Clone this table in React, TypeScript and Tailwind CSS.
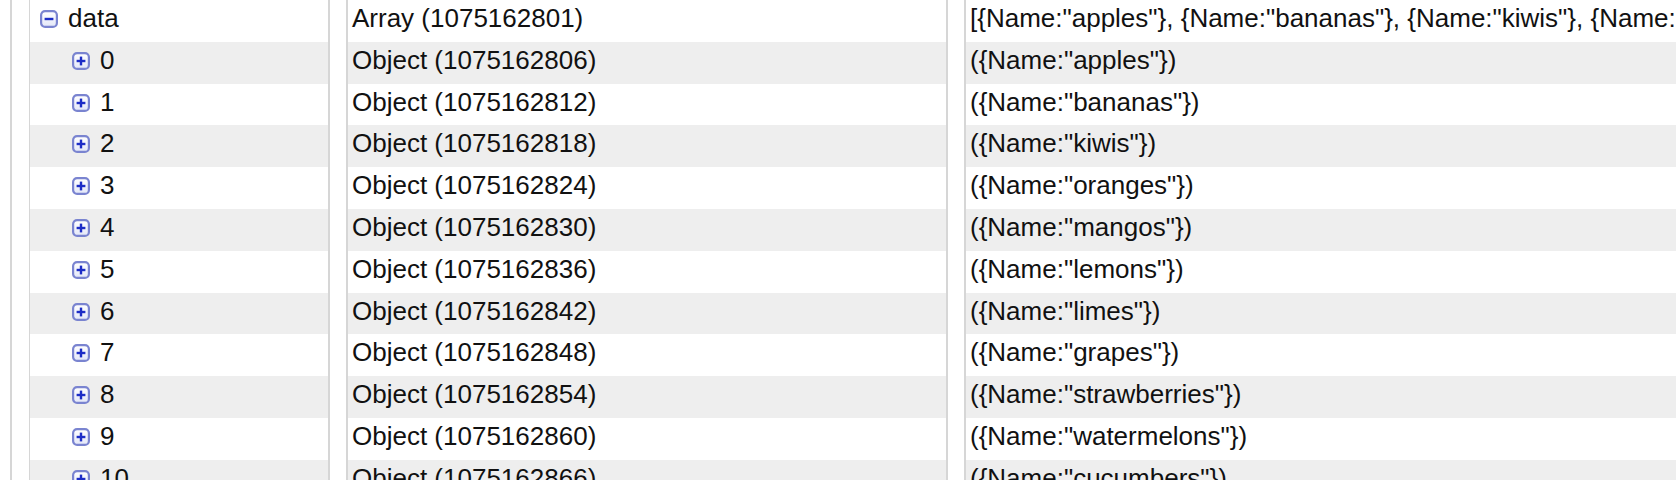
import React from "react";

const names = [
  "apples",
  "bananas",
  "kiwis",
  "oranges",
  "mangos",
  "lemons",
  "limes",
  "grapes",
  "strawberries",
  "watermelons",
  "cucumbers",
];

function ToggleIcon({ minus }: { minus?: boolean }) {
  const id = minus ? "gm" : "gp";
  return (
    <svg
      width="18"
      height="18"
      viewBox="0 0 18 18"
      className="inline-block align-[-1px]"
    >
      <defs>
        <linearGradient id={id} x1="0" y1="0" x2="0" y2="1">
          <stop offset="0" stopColor="#ffffff" />
          <stop offset="1" stopColor="#e3e7f8" />
        </linearGradient>
      </defs>
      <rect
        x="1.1"
        y="1.1"
        width="15.8"
        height="15.8"
        rx="4"
        fill={`url(#${id})`}
        stroke="#7a84d0"
        strokeWidth="2.2"
      />
      <line x1="4.6" y1="9" x2="13.4" y2="9" stroke="#1d2dc6" strokeWidth="2.4" />
      {!minus && (
        <line x1="9" y1="4.6" x2="9" y2="13.4" stroke="#1d2dc6" strokeWidth="2.4" />
      )}
    </svg>
  );
}

const rowCls = (i: number) =>
  `h-[41.8px] leading-[36px] whitespace-nowrap overflow-hidden ${
    i % 2 === 1 ? "bg-[#eeeeee]" : "bg-white"
  }`;

export default function App() {
  const rows = names.map((n, i) => ({
    key: String(i),
    type: `Object (${1075162806 + 6 * i})`,
    value: `({Name:"${n}"})`,
  }));
  const arrVal = "[" + names.map((n) => `{Name:"${n}"}`).join(", ") + "]";

  return (
    <div
      className="flex h-[480px] w-[1676px] overflow-hidden bg-white text-[26px] text-[#111111]"
      style={{ fontFamily: '"Liberation Sans", Arial, Helvetica, sans-serif' }}
    >
      <div className="w-[12px] shrink-0 border-r-2 border-[#d6d6d6]" />
      <div className="ml-[17px] w-[301px] shrink-0 border-l border-r-2 border-[#d6d6d6]">
        <div className={rowCls(0) + " pl-[10px]"}>
          <ToggleIcon minus />
          <span className="ml-[10px]">data</span>
        </div>
        {rows.map((r, i) => (
          <div key={r.key} className={rowCls(i + 1) + " pl-[42px]"}>
            <ToggleIcon />
            <span className="ml-[10px]">{r.key}</span>
          </div>
        ))}
      </div>
      <div className="ml-[16px] w-[602px] shrink-0 border-l-2 border-r-2 border-[#d6d6d6]">
        <div className={rowCls(0) + " pl-[4px]"}>Array (1075162801)</div>
        {rows.map((r, i) => (
          <div key={r.key} className={rowCls(i + 1) + " pl-[4px]"}>
            {r.type}
          </div>
        ))}
      </div>
      <div className="ml-[16px] min-w-0 flex-1 border-l-2 border-[#d6d6d6]">
        <div className={rowCls(0) + " pl-[4px]"}>{arrVal}</div>
        {rows.map((r, i) => (
          <div key={r.key} className={rowCls(i + 1) + " pl-[4px]"}>
            {r.value}
          </div>
        ))}
      </div>
    </div>
  );
}
